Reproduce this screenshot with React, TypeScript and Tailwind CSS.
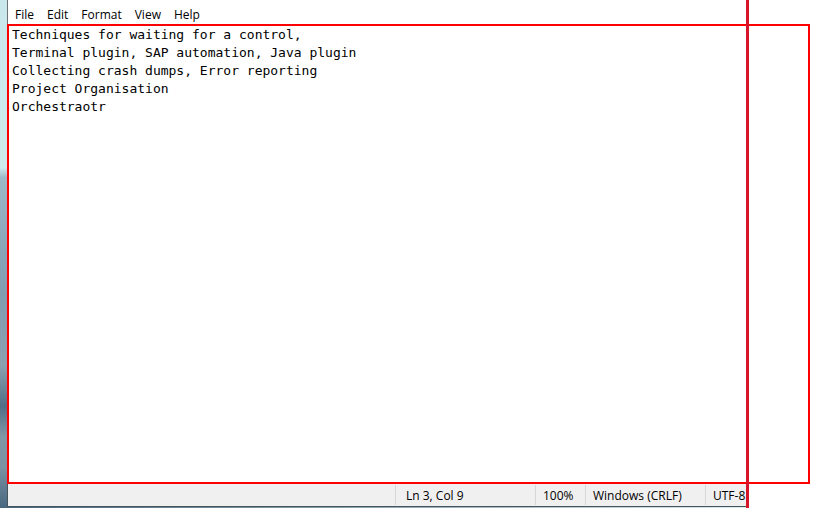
import { useState } from "react";

const menus = ["File", "Edit", "Format", "View", "Help"];

const initialText = [
  "Techniques for waiting for a control,",
  "Terminal plugin, SAP automation, Java plugin",
  "Collecting crash dumps, Error reporting",
  "Project Organisation",
  "Orchestraotr",
].join("\n");

function MenuBar() {
  return (
    <nav
      aria-label="Menu"
      className="flex h-6 shrink-0 items-end gap-[13px] border-l border-[#6b7478] pl-[7px]"
    >
      {menus.map((name) => (
        <button key={name} type="button" className="leading-[18px]">
          {name}
        </button>
      ))}
    </nav>
  );
}

function StatusBar() {
  return (
    <footer className="mr-[88px] h-6 shrink-0 bg-linear-to-r from-[#48677f] to-[#dcebea]">
      <div className="flex h-[23px] border-b border-l border-[#46545c] bg-[#f0f0f0] py-px leading-[21px]">
        <div className="flex-1" />
        <div className="w-[140px] border-l border-[#d7d7d7] pl-[10px]">
          Ln 3, Col 9
        </div>
        <div className="w-[50px] border-l border-[#d7d7d7] pl-[7px]">100%</div>
        <div className="w-[120px] border-l border-[#d7d7d7] pl-[7px]">
          Windows (CRLF)
        </div>
        <div className="w-[41px] border-l border-[#d7d7d7] pl-[7px]">UTF-8</div>
      </div>
    </footer>
  );
}

export default function App() {
  const [text, setText] = useState(initialText);
  return (
    <div className="relative flex h-screen bg-white font-['Open_Sans','Noto_Sans',sans-serif] text-[12px] text-black">
      <div className="w-[7px] shrink-0 bg-[linear-gradient(to_bottom,#c9e8ec_0%,#cdebed_33%,#9db8c6_35%,#88a4b8_50%,#829cb0_58%,#8ba1b0_72%,#526f86_80%,#8097a6_86%,#7a92a2_92%,#48677f_100%)]" />
      <main className="flex min-w-0 flex-1 flex-col">
        <MenuBar />
        <div className="mr-6 flex min-h-0 flex-1 border-2 border-[#ff0000]">
          <textarea
            aria-label="Text editor"
            spellCheck={false}
            value={text}
            onChange={(event) => setText(event.target.value)}
            className="block w-full resize-none bg-white pl-[3px] font-['DejaVu_Sans_Mono','Liberation_Mono',monospace] text-[13px] leading-[18px] outline-none"
          />
        </div>
        <StatusBar />
      </main>
      <div className="pointer-events-none absolute inset-y-0 right-[85px] w-[3px] bg-[#d8142a]" />
    </div>
  );
}
